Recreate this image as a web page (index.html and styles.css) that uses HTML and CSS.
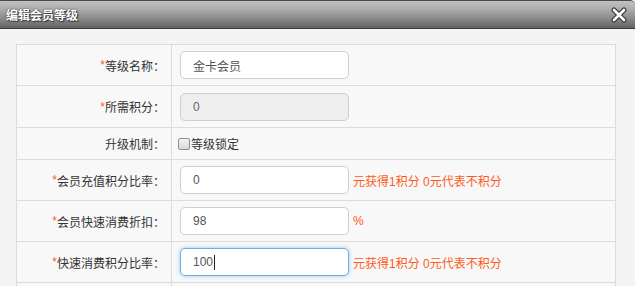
FILE: index.html
```html
<!DOCTYPE html>
<html lang="zh-CN">
<head>
<meta charset="utf-8">
<title>编辑会员等级</title>
<link rel="stylesheet" href="styles.css">
</head>
<body>
<div class="dialog">
  <div class="titlebar">
    <span class="title">编辑会员等级</span>
    <button class="close" type="button" aria-label="关闭">
      <svg width="16" height="16" viewBox="0 0 16 16">
        <path d="M3 3 L13 13 M13 3 L3 13" stroke="#3a3a3a" stroke-width="5" stroke-linecap="round" fill="none"/>
        <path d="M3 3 L13 13 M13 3 L3 13" stroke="#ffffff" stroke-width="2.6" stroke-linecap="round" fill="none"/>
      </svg>
    </button>
  </div>
  <div class="content">
    <div class="form">
      <div class="row r1">
        <div class="label"><span class="req">*</span>等级名称：</div>
        <div class="field"><input class="inp" type="text" value="金卡会员"></div>
      </div>
      <div class="row r2">
        <div class="label"><span class="req">*</span>所需积分：</div>
        <div class="field"><input class="inp" type="text" value="0" disabled></div>
      </div>
      <div class="row r3">
        <div class="label">升级机制：</div>
        <div class="field"><label class="chk"><span class="box"></span>等级锁定</label></div>
      </div>
      <div class="row">
        <div class="label"><span class="req">*</span>会员充值积分比率：</div>
        <div class="field"><input class="inp" type="text" value="0"><span class="hint">元获得1积分 0元代表不积分</span></div>
      </div>
      <div class="row">
        <div class="label"><span class="req">*</span>会员快速消费折扣：</div>
        <div class="field"><input class="inp" type="text" value="98"><span class="hint">%</span></div>
      </div>
      <div class="row">
        <div class="label"><span class="req">*</span>快速消费积分比率：</div>
        <div class="field"><div class="inp focus">100<span class="caret"></span></div><span class="hint">元获得1积分 0元代表不积分</span></div>
      </div>
      <div class="row">
        <div class="label"></div>
        <div class="field"></div>
      </div>
    </div>
  </div>
</div>
</body>
</html>
```
FILE: styles.css
```css
html, body {
  margin: 0;
  padding: 0;
  overflow: hidden;
}
body {
  background: #f4f4f4;
  font-family: "Liberation Sans", "Noto Sans CJK SC", sans-serif;
  font-size: 12px;
  color: #333;
}
.dialog {
  width: 635px;
}
.titlebar {
  height: 27px;
  border-top: 1px solid #4a4a4a;
  border-bottom: 1px solid #3a3a3a;
  border-top-right-radius: 5px;
  background: linear-gradient(to bottom, #c2c2c2 0%, #adadad 30%, #8a8a8a 65%, #626262 100%);
  display: flex;
  align-items: center;
  justify-content: space-between;
  padding: 0 8px 0 6px;
}
.title {
  color: #fff;
  font-weight: bold;
  font-size: 12px;
  text-shadow: 0 0 2px #333, 1px 1px 1px #333;
}
.close {
  border: 0;
  padding: 0;
  background: transparent;
  width: 16px;
  height: 16px;
  display: flex;
}
.content {
  padding: 15px 19px 0 16px;
}
.form {
  border-top: 1px solid #dcdcdc;
  border-left: 1px solid #dcdcdc;
  border-right: 1px solid #dcdcdc;
  background: #f8f8f8;
}
.row {
  display: flex;
  height: 40px;
  border-bottom: 1px solid #dcdcdc;
}
.row.r2 { height: 41px; }
.row.r3 { height: 31px; }
.label {
  width: 148px;
  padding-right: 6px;
  border-right: 1px solid #dcdcdc;
  display: flex;
  align-items: center;
  justify-content: flex-end;
  white-space: nowrap;
}
.req {
  color: #ff5a1a;
}
.field {
  flex: 1;
  display: flex;
  align-items: center;
  padding-left: 8px;
}
.inp {
  box-sizing: border-box;
  width: 169px;
  height: 28px;
  border: 1px solid #cfcfcf;
  border-radius: 5px;
  background: #fff;
  padding: 0 12px;
  font-family: "Liberation Sans", "Noto Sans CJK SC", sans-serif;
  font-size: 12px;
  color: #555;
  outline: none;
  margin: 0;
}
.inp:disabled {
  background: #eeeeee;
  color: #666;
}
.inp.focus {
  display: flex;
  align-items: center;
  border-color: #6aaeea;
  box-shadow: 0 0 4px rgba(102, 175, 233, 0.6);
}
.caret {
  display: inline-block;
  width: 1px;
  height: 15px;
  background: #222;
  margin-left: 1px;
}
.hint {
  color: #ff5a1a;
  margin-left: 4px;
  white-space: nowrap;
}
.chk {
  display: flex;
  align-items: center;
  margin-left: -2px;
}
.box {
  box-sizing: border-box;
  width: 12px;
  height: 12px;
  border: 1px solid #8e8e8e;
  border-radius: 2px;
  background: linear-gradient(to bottom, #f4f4f4, #d8d8d8);
  margin-right: 1px;
}
```
